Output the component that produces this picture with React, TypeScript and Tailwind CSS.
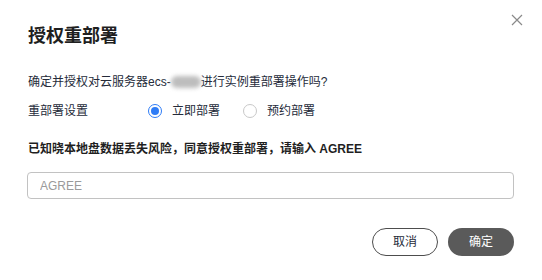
export default function App() {
  const font = { fontFamily: '"Liberation Sans", "Noto Sans CJK SC", sans-serif' };
  return (
    <div className="w-[542px] h-[280px] bg-white relative text-[#252b3a]" style={font}>
      {/* Close */}
      <button className="absolute left-[511px] top-[14px] w-[12px] h-[12px] text-[#8a8a8a]">
        <svg viewBox="0 0 12 12" width="12" height="12" fill="none" stroke="currentColor" strokeWidth="1.2">
          <path d="M1 1L11 11M11 1L1 11" />
        </svg>
      </button>

      <div className="pl-[28px] pr-[28px] pt-[24px]">
        <h2 className="text-[18px] leading-[24px] font-bold text-[#1f1f1f]">授权重部署</h2>

        <p className="mt-[25px] text-[12px] leading-[18px] flex items-center">
          <span>确定并授权对云服务器ecs-</span>
          <span className="inline-block w-[30px] h-[12px] rounded-full bg-[#bdbdbd] blur-[2px]" />
          <span>进行实例重部署操作吗?</span>
        </p>

        <div className="mt-[11px] flex items-center text-[12px] leading-[18px]">
          <span className="w-[120px]">重部署设置</span>
          <label className="flex items-center">
            <span className="w-[14px] h-[14px] rounded-full border border-[#2e7cf6] flex items-center justify-center">
              <span className="w-[8px] h-[8px] rounded-full bg-[#2e7cf6]" />
            </span>
            <span className="ml-[10px]">立即部署</span>
          </label>
          <label className="flex items-center ml-[23px]">
            <span className="w-[14px] h-[14px] rounded-full border border-[#c8c8c8]" />
            <span className="ml-[10px]">预约部署</span>
          </label>
        </div>

        <p className="mt-[20px] text-[12px] leading-[18px] font-semibold text-[#1f1f1f]">
          已知晓本地盘数据丢失风险，同意授权重部署，请输入 AGREE
        </p>

        <input
          placeholder="AGREE"
          className="mt-[14px] w-[487px] -ml-[1px] h-[27px] rounded-[4px] border border-[#c2c2c2] px-[12px] text-[12px] placeholder:text-[#9a9a9a] outline-none"
        />

        <div className="mt-[29px] flex justify-end gap-[10px]">
          <button className="w-[66px] h-[28px] rounded-full border border-[#4d4d4d] bg-white text-[12px] text-[#252b3a]">
            取消
          </button>
          <button className="w-[66px] h-[28px] rounded-full bg-[#5a5a5a] text-[12px] text-white">
            确定
          </button>
        </div>
      </div>
    </div>
  );
}
